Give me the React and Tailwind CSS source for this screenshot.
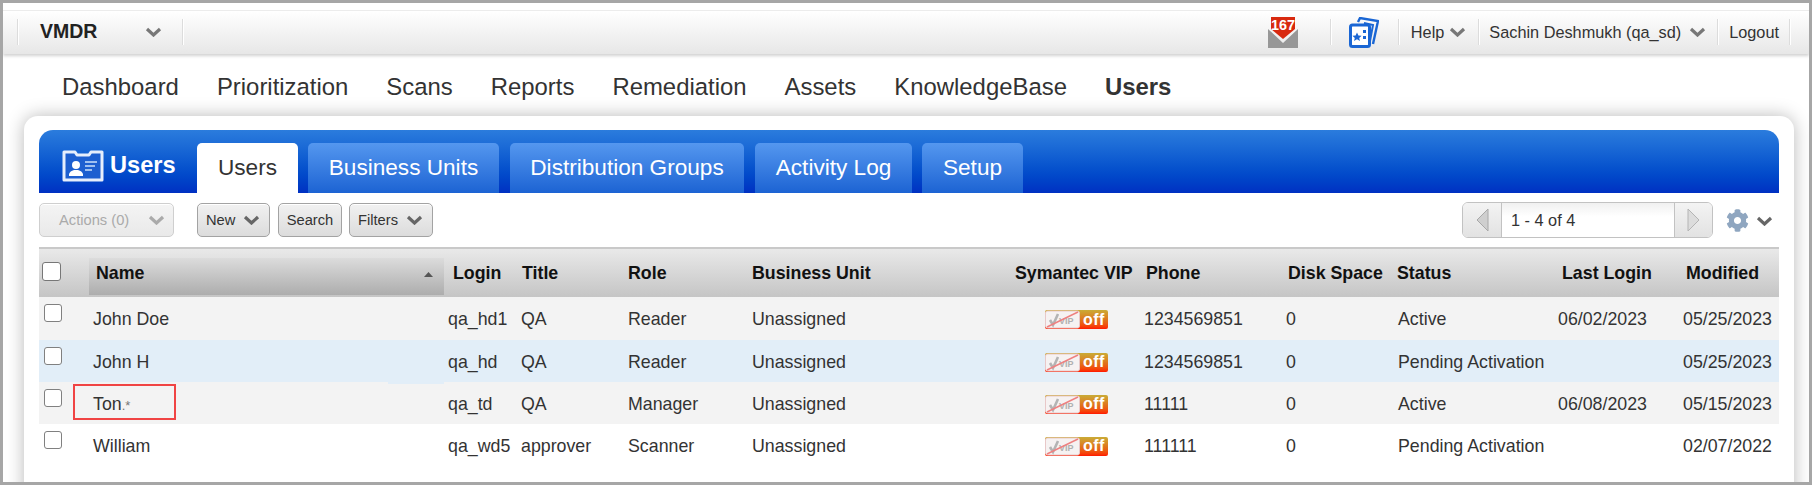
import React from 'react';
import { FaCog } from 'react-icons/fa';

const GRID = 'grid grid-cols-[50px_355px_73px_106px_125px_262px_130px_142px_111px_160px_127px_99px]';

const headers = [
  { label: 'Name', cls: 'pl-[7px]' },
  { label: 'Login', cls: 'pl-[9px]' },
  { label: 'Title', cls: 'pl-[5px]' },
  { label: 'Role', cls: 'pl-[5px]' },
  { label: 'Business Unit', cls: 'pl-[4px]' },
  { label: 'Symantec VIP', cls: 'pl-[5px]' },
  { label: 'Phone', cls: 'pl-[6px]' },
  { label: 'Disk Space', cls: 'pl-[6px]' },
  { label: 'Status', cls: 'pl-[4px]' },
  { label: 'Last Login', cls: 'pl-[9px]' },
  { label: 'Modified', cls: 'pl-[6px]' },
];

const rows = [
  { name: 'John Doe', login: 'qa_hd1', title: 'QA', role: 'Reader', phone: '1234569851', status: 'Active', last: '06/02/2023', modified: '05/25/2023', cls: 'bg-[#f3f3f3] h-[43px]' },
  { name: 'John H', hovered: true, login: 'qa_hd', title: 'QA', role: 'Reader', phone: '1234569851', status: 'Pending Activation', last: '', modified: '05/25/2023', cls: 'bg-[#e2eef8] h-[42px]' },
  { name: 'Ton', masked: true, login: 'qa_td', title: 'QA', role: 'Manager', phone: '11111', status: 'Active', last: '06/08/2023', modified: '05/15/2023', cls: 'bg-[#f3f3f3] h-[42px]' },
  { name: 'William', login: 'qa_wd5', title: 'approver', role: 'Scanner', phone: '111111', status: 'Pending Activation', last: '', modified: '02/07/2022', cls: 'bg-white h-[42px]' },
];

const Chevron = ({ className = '', color = '#777' }) => (
  <svg width="17" height="10" viewBox="0 0 17 10" className={className}>
    <polyline points="2,2 8.5,8 15,2" fill="none" stroke={color} strokeWidth="3.2" />
  </svg>
);

const Sep = ({ className = '' }) => <div className={`w-[2px] h-[26px] bg-[#dcdcdc] border-r border-white ${className}`} />;

const Button = ({ children, className = '' }) => (
  <div className={`h-[34px] flex items-center rounded-[5px] border border-[#a3a3a3] bg-linear-to-b from-[#f1f1f1] to-[#dcdcdc] shadow-[inset_0_1px_0_#fff] text-[14.7px] text-[#333] ${className}`}>
    {children}
  </div>
);

// mail icon with the red counter flag
const MailIcon = () => (
  <svg width="30" height="31" viewBox="0 0 30 31">
    <path d="M0 12 L15 26 L30 12 V31 H0 Z" fill="#979797" />
    <path d="M3 0 H27 V12 L15 22 L3 12 Z" fill="#d8290f" />
    <text x="15" y="13" textAnchor="middle" fontSize="15" fontWeight="700" fill="#fff" textLength="24" lengthAdjust="spacingAndGlyphs" fontFamily="Liberation Sans, sans-serif">167</text>
  </svg>
);

const CardsIcon = () => (
  <svg width="30" height="31" viewBox="0 0 30 31">
    <path d="M9 5 L11 1 L29 4 L24 27" fill="none" stroke="#1a66d4" strokeWidth="2.4" />
    <path d="M15 6 L24 8 L21 24" fill="none" stroke="#1a66d4" strokeWidth="2" />
    <rect x="1.5" y="8" width="19" height="21.5" rx="2" fill="#fff" stroke="#1a66d4" strokeWidth="3" />
    <path d="M8 15.5 l1.4 3 3.2.3-2.4 2.1.8 3.1-3-1.7-3 1.7.8-3.1-2.4-2.1 3.2-.3z" fill="#1a66d4" />
    <rect x="14" y="13" width="3" height="3" fill="#1a66d4" />
    <rect x="14" y="19" width="3" height="3" fill="#1a66d4" />
  </svg>
);

const IdCardIcon = () => (
  <svg width="42" height="32" viewBox="0 0 42 32">
    <path d="M2 2 H13 L15 5 H27 L29 2 H40 V30 H2 Z" fill="#1d5fd0" stroke="#e6eefc" strokeWidth="3" strokeLinejoin="round" />
    <circle cx="14" cy="15" r="4" fill="#fff" />
    <path d="M7 26 V24 Q8 21 12 20 H16 Q20 21 21 24 V26 Z" fill="#fff" />
    <rect x="23" y="11" width="12" height="2" fill="#9fc0f0" />
    <rect x="23" y="15" width="10" height="2" fill="#9fc0f0" />
    <rect x="23" y="19" width="7" height="2" fill="#9fc0f0" />
  </svg>
);

const VipOff = () => (
  <div className="w-[63px] h-[19px] rounded-[2px] flex items-center bg-linear-to-b from-[#c9ab36] via-[#e0701a] via-55% to-[#ff1200] overflow-hidden">
    <svg width="35" height="19" viewBox="0 0 35 19" className="shrink-0">
      <rect x="0.5" y="1" width="34" height="17" rx="2" fill="#f6f2f2" stroke="#e8c8c8" />
      <path d="M5 10 L8 15 L13 4" fill="none" stroke="#b4b4b4" strokeWidth="2.6" />
      <text x="14" y="14" fontSize="9" fontWeight="700" fill="#b0b0b0" fontFamily="Liberation Sans, sans-serif">VIP</text>
      <line x1="2" y1="17" x2="33" y2="2" stroke="#ee8080" strokeWidth="1.4" />
    </svg>
    <span className="pl-[3px] text-[16px] font-bold leading-none text-white tracking-[0.5px]">off</span>
  </div>
);

const Tab = ({ children, className = '' }) => (
  <div className={`h-[50px] flex items-center justify-center rounded-t-[5px] bg-linear-to-b from-[#5497ef] to-[#1c63d3] text-[22.6px] text-white whitespace-nowrap ${className}`}>
    {children}
  </div>
);

export default function App() {
  const navItems = ['Dashboard', 'Prioritization', 'Scans', 'Reports', 'Remediation', 'Assets', 'KnowledgeBase'];

  return (
    <div className="w-[1812px] h-[485px] box-border border-[3px] border-[#a6a6a6] bg-white overflow-hidden font-['Liberation_Sans',Arial,sans-serif] text-[#333]">
      {/* Top bar */}
      <div className="h-[51px] pt-[7px] bg-white shadow-[0_2px_3px_rgba(0,0,0,0.18)] relative">
        <div className="h-[44px] pb-[1px] flex items-center border-t border-[#ececec] bg-linear-to-b from-white to-[#e7e7e7]">
          <Sep className="ml-[14px]" />
          <span className="ml-[21px] text-[19.5px] font-bold text-[#222]">VMDR</span>
          <Chevron className="ml-[48px]" />
          <Sep className="ml-[20px]" />
          <div className="ml-auto mr-[18px] flex items-center text-[16.3px]">
            <MailIcon />
            <Sep className="ml-[32px]" />
            <div className="ml-[17px]"><CardsIcon /></div>
            <Sep className="ml-[19px]" />
            <span className="ml-[11px]">Help</span>
            <Chevron className="ml-[5px]" />
            <Sep className="ml-[12px]" />
            <span className="ml-[9px]">Sachin Deshmukh (qa_sd)</span>
            <Chevron className="ml-[8px]" />
            <Sep className="ml-[11px]" />
            <span className="ml-[10px]">Logout</span>
            <Sep className="ml-[10px]" />
          </div>
        </div>
      </div>

      {/* Main nav */}
      <div className="h-[62px] pt-[4px] pl-[59px] flex items-center gap-[38px] text-[23.9px] text-[#333]">
        {navItems.map((item) => (
          <span key={item}>{item}</span>
        ))}
        <span className="font-bold">Users</span>
      </div>

      {/* Panel */}
      <div className="ml-[21px] w-[1770px] h-[400px] px-[15px] pt-[14px] rounded-t-[14px] bg-white shadow-[0_0_18px_rgba(0,0,0,0.28)]">
        <div className="h-[63px] flex items-end rounded-t-[14px] bg-linear-to-b from-[#2b7cdd] to-[#0030c2]">
          <div className="w-[158px] pl-[23px] self-start mt-[18px] flex items-center">
            <IdCardIcon />
            <span className="ml-[6px] text-[23.6px] font-bold text-white">Users</span>
          </div>
          <div className="h-[50px] w-[101px] flex items-center justify-center rounded-t-[5px] bg-white text-[22.6px] text-[#333]">Users</div>
          <Tab className="ml-[10px] w-[191px]">Business Units</Tab>
          <Tab className="ml-[11px] w-[234px]">Distribution Groups</Tab>
          <Tab className="ml-[11px] w-[157px]">Activity Log</Tab>
          <Tab className="ml-[10px] w-[101px]">Setup</Tab>
        </div>

        {/* Toolbar */}
        <div className="h-[54px] pr-[6px] flex items-center">
          <Button className="w-[135px] pl-[19px] border-[#cfcfcf] from-[#f4f4f4] to-[#e9e9e9] text-[#aaa]">
            Actions (0)
            <Chevron className="ml-[19px]" color="#aaa" />
          </Button>
          <Button className="ml-[23px] w-[73px] pl-[8px]">
            New
            <Chevron className="ml-[8px]" color="#666" />
          </Button>
          <Button className="ml-[8px] w-[64px] justify-center">Search</Button>
          <Button className="ml-[7px] w-[84px] pl-[8px]">
            Filters
            <Chevron className="ml-[8px]" color="#666" />
          </Button>

          <div className="ml-auto w-[251px] h-[36px] flex rounded-[6px] border border-[#c2c2c2] overflow-hidden">
            <div className="w-[39px] flex items-center justify-center bg-linear-to-b from-[#f3f3f3] to-[#e2e2e2] border-r border-[#c2c2c2]">
              <svg width="13" height="24" viewBox="0 0 13 24"><polygon points="12,1 12,23 1,12" fill="#cfcfcf" stroke="#a8a8a8" /></svg>
            </div>
            <div className="flex-1 pl-[9px] flex items-center text-[16.3px] bg-linear-to-b from-[#f0f0f0] to-white to-40%">1 - 4 of 4</div>
            <div className="w-[38px] flex items-center justify-center bg-linear-to-b from-[#f3f3f3] to-[#e2e2e2] border-l border-[#c2c2c2]">
              <svg width="13" height="24" viewBox="0 0 13 24"><polygon points="1,1 1,23 12,12" fill="#dcdcdc" stroke="#b4b4b4" /></svg>
            </div>
          </div>
          <FaCog className="ml-[13px] text-[#8fa6c0]" size={23} />
          <Chevron className="ml-[7px] mt-[2px]" color="#666" />
        </div>

        {/* Table */}
        <div className={`${GRID} h-[50px] border-t-2 border-[#c9c9c9] bg-linear-to-b from-[#e9e9e9] to-[#c5c5c5] text-[17.8px] font-bold text-[#111]`}>
          <div className="flex items-center pb-[3px] pl-[3px]">
            <input type="checkbox" className="appearance-none w-[19px] h-[19px] bg-white border border-[#777] rounded-[3px]" />
          </div>
          {headers.map((h, i) =>
            i === 0 ? (
              <div key={h.label} className={`mt-[9px] mb-[2px] pb-[7px] flex items-center justify-between pr-[11px] bg-linear-to-b from-[#dcdcdc] to-[#adadad] ${h.cls}`}>
                {h.label}
                <svg width="9" height="5" viewBox="0 0 9 5" className="mt-[3px]"><polygon points="4.5,0 9,5 0,5" fill="#555" /></svg>
              </div>
            ) : (
              <div key={h.label} className={`flex items-center whitespace-nowrap ${h.cls}`}>{h.label}</div>
            )
          )}
        </div>

        {rows.map((r) => (
          <div key={r.name} className={`${GRID} relative items-center pt-[2px] text-[17.8px] text-[#333] whitespace-nowrap ${r.cls}`}>
            <div className="self-start pt-[5px] pl-[5px] flex">
              <input type="checkbox" className="appearance-none w-[18px] h-[18px] bg-white border border-[#808080] rounded-[3px]" />
            </div>
            <div className="pl-[4px]">
              {r.name}
              {r.masked && <span className="text-[13px] text-[#777]">.*</span>}
            </div>
            <div className="pl-[4px]">{r.login}</div>
            <div className="pl-[4px]">{r.title}</div>
            <div className="pl-[5px]">{r.role}</div>
            <div className="pl-[4px]">Unassigned</div>
            <div className="pl-[35px]"><VipOff /></div>
            <div className="pl-[4px]">{r.phone}</div>
            <div className="pl-[4px]">0</div>
            <div className="pl-[5px]">{r.status}</div>
            <div className="pl-[5px]">{r.last}</div>
            <div className="pl-[3px]">{r.modified}</div>
            {r.masked && <div className="absolute left-[34px] top-[2px] w-[103px] h-[36px] border-2 border-[#f04444]" />}
            {r.hovered && <div className="absolute z-10 left-[349px] top-[42px] w-[56px] h-[2px] bg-[#e2eef8]" />}
          </div>
        ))}
      </div>
    </div>
  );
}
